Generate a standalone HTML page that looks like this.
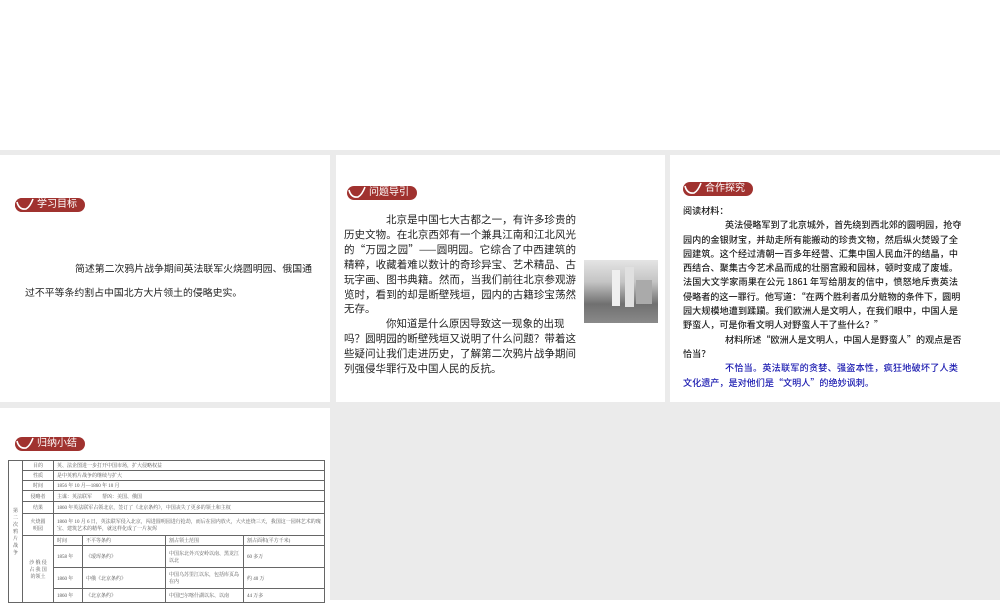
<!DOCTYPE html>
<html><head><meta charset="utf-8"><style>
*{margin:0;padding:0;box-sizing:border-box}
body{width:1000px;height:600px;background:#fff;position:relative;overflow:hidden;font-family:"Liberation Sans","Noto Sans CJK SC",sans-serif;color:#222}
.grey{position:absolute;left:0;top:150px;width:1000px;height:450px;background:#ebebeb}
.p{position:absolute;background:#fff}
.badge{position:absolute;height:14px;background:#a0322f;border-radius:7px;color:#fff;font-size:10px;line-height:14px;padding-left:22px;padding-right:8px;white-space:nowrap}
.badge svg{position:absolute;left:0;top:0}
.t{position:absolute;font-family:"Noto Sans CJK SC",sans-serif;white-space:nowrap}
.t div{text-align:justify;text-align-last:justify;overflow:visible}
.t div.l{text-align-last:left}
table{border-collapse:collapse;font-size:5px;font-family:"Liberation Serif","Noto Serif CJK SC",serif;color:#555}
td{border:0.7px solid #666;padding:0 3px;vertical-align:middle}
</style></head><body>
<div class="grey"></div>
<div class="p" style="left:0;top:155px;width:330px;height:247px">
 <div class="badge" style="left:15px;top:43px"><svg width="22" height="14"><circle cx="7" cy="7" r="7" fill="#a0322f"/><path d="M2 4 Q4 12 11 11 Q15 9 18 1" stroke="#fff" stroke-width="1.6" fill="none"/></svg>学习目标</div>
 <div style="position:absolute;left:75px;top:106px;font-size:9.9px;font-family:'Noto Sans CJK SC',sans-serif">简述第二次鸦片战争期间英法联军火烧圆明园、俄国通</div>
 <div style="position:absolute;left:25px;top:130px;font-size:9.9px;font-family:'Noto Sans CJK SC',sans-serif">过不平等条约割占中国北方大片领土的侵略史实。</div>
</div>
<div class="p" style="left:336px;top:155px;width:329px;height:247px">
 <div class="badge" style="left:11px;top:31px"><svg width="22" height="14"><path d="M2 4 Q4 12 11 11 Q15 9 18 1" stroke="#fff" stroke-width="1.6" fill="none"/></svg>问题导引</div>
 <div class="t" style="left:8px;top:58px;width:232px;font-size:10.5px;line-height:14.9px">
  <div style="padding-left:42px">北京是中国七大古都之一，有许多珍贵的</div>
  <div>历史文物。在北京西郊有一个兼具江南和江北风光</div>
  <div>的“万园之园”——圆明园。它综合了中西建筑的</div>
  <div>精粹，收藏着难以数计的奇珍异宝、艺术精品、古</div>
  <div>玩字画、图书典籍。然而，当我们前往北京参观游</div>
  <div>览时，看到的却是断壁残垣，园内的古籍珍宝荡然</div>
  <div class="l">无存。</div>
  <div class="l" style="padding-left:42px">你知道是什么原因导致这一现象的出现</div>
  <div>吗？圆明园的断壁残垣又说明了什么问题？带着这</div>
  <div>些疑问让我们走进历史，了解第二次鸦片战争期间</div>
  <div class="l">列强侵华罪行及中国人民的反抗。</div>
 </div>
 <div style="position:absolute;left:248px;top:105px;width:74px;height:63px;background:linear-gradient(180deg,#e4e4e4 0%,#c4c4c4 35%,#707070 70%,#8a8a8a 100%)"><div style="position:absolute;left:28px;top:10px;width:8px;height:36px;background:#efefef"></div><div style="position:absolute;left:41px;top:7px;width:9px;height:40px;background:#e0e0e0"></div><div style="position:absolute;left:52px;top:20px;width:16px;height:24px;background:#aaa"></div></div>
</div>
<div class="p" style="left:670px;top:155px;width:330px;height:247px">
 <div class="badge" style="left:13px;top:27px"><svg width="22" height="14"><path d="M2 4 Q4 12 11 11 Q15 9 18 1" stroke="#fff" stroke-width="1.6" fill="none"/></svg>合作探究</div>
 <div class="t" style="left:13px;top:48px;width:275px;font-size:9.1px;line-height:14.3px;font-weight:500">
  <div class="l">阅读材料：</div>
  <div style="padding-left:42px">英法侵略军到了北京城外，首先绕到西北郊的圆明园，抢夺</div>
  <div>园内的金银财宝，并劫走所有能搬动的珍贵文物，然后纵火焚毁了全</div>
  <div>园建筑。这个经过清朝一百多年经营、汇集中国人民血汗的结晶，中</div>
  <div>西结合、聚集古今艺术品而成的壮丽宫殿和园林，顿时变成了废墟。</div>
  <div>法国大文学家雨果在公元 1861 年写给朋友的信中，愤怒地斥责英法</div>
  <div>侵略者的这一罪行。他写道：“在两个胜利者瓜分赃物的条件下，圆明</div>
  <div>园大规模地遭到蹂躏。我们欧洲人是文明人，在我们眼中，中国人是</div>
  <div class="l">野蛮人，可是你看文明人对野蛮人干了些什么？”</div>
  <div style="padding-left:42px">材料所述“欧洲人是文明人，中国人是野蛮人”的观点是否</div>
  <div class="l">恰当？</div>
  <div style="padding-left:42px;color:#1a1ab0">不恰当。英法联军的贪婪、强盗本性，疯狂地破坏了人类</div>
  <div class="l" style="color:#1a1ab0">文化遗产，是对他们是“文明人”的绝妙讽刺。</div>
 </div>
</div>
<div class="p" style="left:0;top:408px;width:330px;height:192px">
 <div class="badge" style="left:15px;top:29px"><svg width="22" height="14"><path d="M2 4 Q4 12 11 11 Q15 9 18 1" stroke="#fff" stroke-width="1.6" fill="none"/></svg>归纳小结</div>
 <table style="position:absolute;left:8px;top:52px;width:317px">
 <tr style="height:10px"><td rowspan="10" style="width:14px;font-size:5px;text-align:center">第<br>二<br>次<br>鸦<br>片<br>战<br>争</td><td style="width:31px;text-align:center">目的</td><td colspan="4">英、法企图进一步打开中国市场，扩大侵略权益</td></tr>
 <tr style="height:10px"><td style="text-align:center">性质</td><td colspan="4">是中英鸦片战争的继续与扩大</td></tr>
 <tr style="height:10px"><td style="text-align:center">时间</td><td colspan="4">1856 年 10 月—1860 年 10 月</td></tr>
 <tr style="height:11px"><td style="text-align:center">侵略者</td><td colspan="4">主谋：英法联军　　帮凶：美国、俄国</td></tr>
 <tr style="height:12px"><td style="text-align:center">结果</td><td colspan="4">1860 年英法联军占领北京，签订了《北京条约》，中国丧失了更多的领土和主权</td></tr>
 <tr style="height:22px"><td style="text-align:center">火烧圆<br>明园</td><td colspan="4">1860 年 10 月 6 日，英法联军侵入北京，闯进圆明园进行抢劫，而后在园内放火，大火连烧三天，我国这一园林艺术的瑰宝、建筑艺术的精华，就这样化成了一片灰烬</td></tr>
 <tr style="height:10px"><td rowspan="4" style="text-align:center">沙 俄 侵<br>占 我 国<br>的领土</td><td style="width:29px">时间</td><td style="width:83px">不平等条约</td><td style="width:78px">割占领土范围</td><td>割占面积(平方千米)</td></tr>
 <tr style="height:22px"><td>1858 年</td><td>《瑷珲条约》</td><td>中国东北外兴安岭以南、黑龙江以北</td><td>60 多万</td></tr>
 <tr style="height:21px"><td>1860 年</td><td>中俄《北京条约》</td><td>中国乌苏里江以东，包括库页岛在内</td><td>约 40 万</td></tr>
 <tr style="height:14px"><td>1860 年</td><td>《北京条约》</td><td>中国巴尔喀什湖以东、以南</td><td>44 万多</td></tr>
 </table>
</div>
</body></html>
